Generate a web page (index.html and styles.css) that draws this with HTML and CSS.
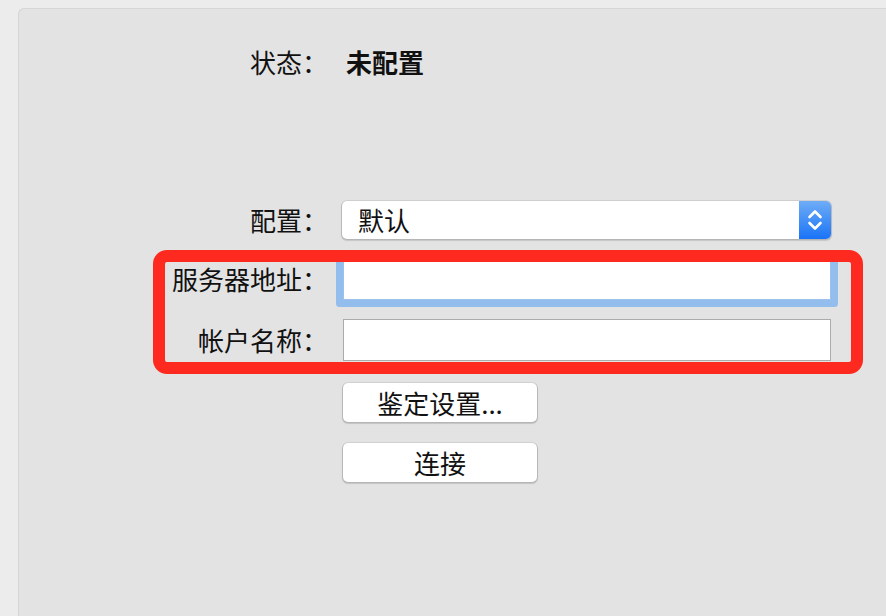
FILE: index.html
```html
<!DOCTYPE html>
<html lang="zh-CN">
<head>
<meta charset="utf-8">
<link rel="stylesheet" href="styles.css">
</head>
<body>
<div class="panel">
  <div class="row row-status">
    <div class="label">状态：</div>
    <div class="value">未配置</div>
  </div>
  <div class="row row-config">
    <div class="label">配置：</div>
    <div class="select">
      <span class="select-text">默认</span>
      <span class="stepper">
        <svg width="16" height="24" viewBox="0 0 16 24"><path d="M2.5 9 L8 3.5 L13.5 9" fill="none" stroke="#fff" stroke-width="2.6" stroke-linecap="round" stroke-linejoin="round"/><path d="M2.5 15 L8 20.5 L13.5 15" fill="none" stroke="#fff" stroke-width="2.6" stroke-linecap="round" stroke-linejoin="round"/></svg>
      </span>
    </div>
  </div>
  <div class="row row-field">
    <div class="label">服务器地址：</div>
    <div class="field focused"></div>
  </div>
  <div class="row row-field">
    <div class="label">帐户名称：</div>
    <div class="field"></div>
  </div>
  <div class="row row-btn first">
    <div class="spacer"></div>
    <div class="button">鉴定设置...</div>
  </div>
  <div class="row row-btn">
    <div class="spacer"></div>
    <div class="button">连接</div>
  </div>
  <div class="highlight"></div>
</div>
</body>
</html>
```

FILE: styles.css
```css
html, body {
  margin: 0;
  height: 100%;
}
body {
  background: #ececec;
  padding: 8px 0 0 18px;
  box-sizing: border-box;
  overflow: hidden;
  font-family: "Noto Sans CJK SC", "Noto Sans", sans-serif;
  color: #111;
}
.panel {
  position: relative;
  height: 100%;
  background: #e3e3e3;
  border-top: 1px solid #d6d6d6;
  border-left: 1px solid #d6d6d6;
  border-top-left-radius: 6px;
  display: flex;
  flex-direction: column;
  padding-top: 33px;
  box-sizing: border-box;
}
.row {
  display: grid;
  grid-template-columns: 309px 488px;
  column-gap: 15px;
  align-items: center;
}
.label {
  text-align: right;
  font-size: 26px;
  line-height: 30px;
  white-space: nowrap;
}
.value {
  font-size: 26px;
  line-height: 30px;
  font-weight: bold;
  padding-left: 3px;
}
.row-status {
  height: 40px;
}
.row-config {
  margin-top: 118px;
  height: 39px;
}
.select {
  margin-left: -1px;
  height: 38px;
  background: #fff;
  border-radius: 5px;
  box-shadow: 0 0 0 1px rgba(0,0,0,0.08), 0 1px 1px 1px rgba(0,0,0,0.13);
  display: flex;
  align-items: center;
  justify-content: space-between;
}
.select-text {
  font-size: 26px;
  line-height: 30px;
  padding-left: 16px;
}
.stepper {
  width: 32px;
  height: 38px;
  border-radius: 0 5px 5px 0;
  background: linear-gradient(#6eacf6, #1a74f8);
  display: flex;
  align-items: center;
  justify-content: center;
}
.row-field {
  margin-top: 19px;
  height: 42px;
}
.field {
  height: 42px;
  box-sizing: border-box;
  background: #fff;
  border: 1px solid #ababab;
}
.field.focused {
  border-color: #9cc1ec;
  box-shadow: 0 0 0 7px #93bdec;
  border-radius: 1px;
}
.row-btn {
  margin-top: 21px;
  height: 39px;
}
.row-btn.first {
  margin-top: 22px;
}
.button {
  width: 194px;
  height: 39px;
  box-sizing: border-box;
  background: #fff;
  border-radius: 5px;
  box-shadow: 0 0 0 1px rgba(0,0,0,0.07), 0 1px 1px 1px rgba(0,0,0,0.14);
  font-size: 26px;
  line-height: 39px;
  text-align: center;
}
.highlight {
  position: absolute;
  left: 134px;
  top: 241px;
  width: 710px;
  height: 124px;
  box-sizing: border-box;
  border: 12px solid #ff2a1f;
  border-radius: 14px;
}
```
